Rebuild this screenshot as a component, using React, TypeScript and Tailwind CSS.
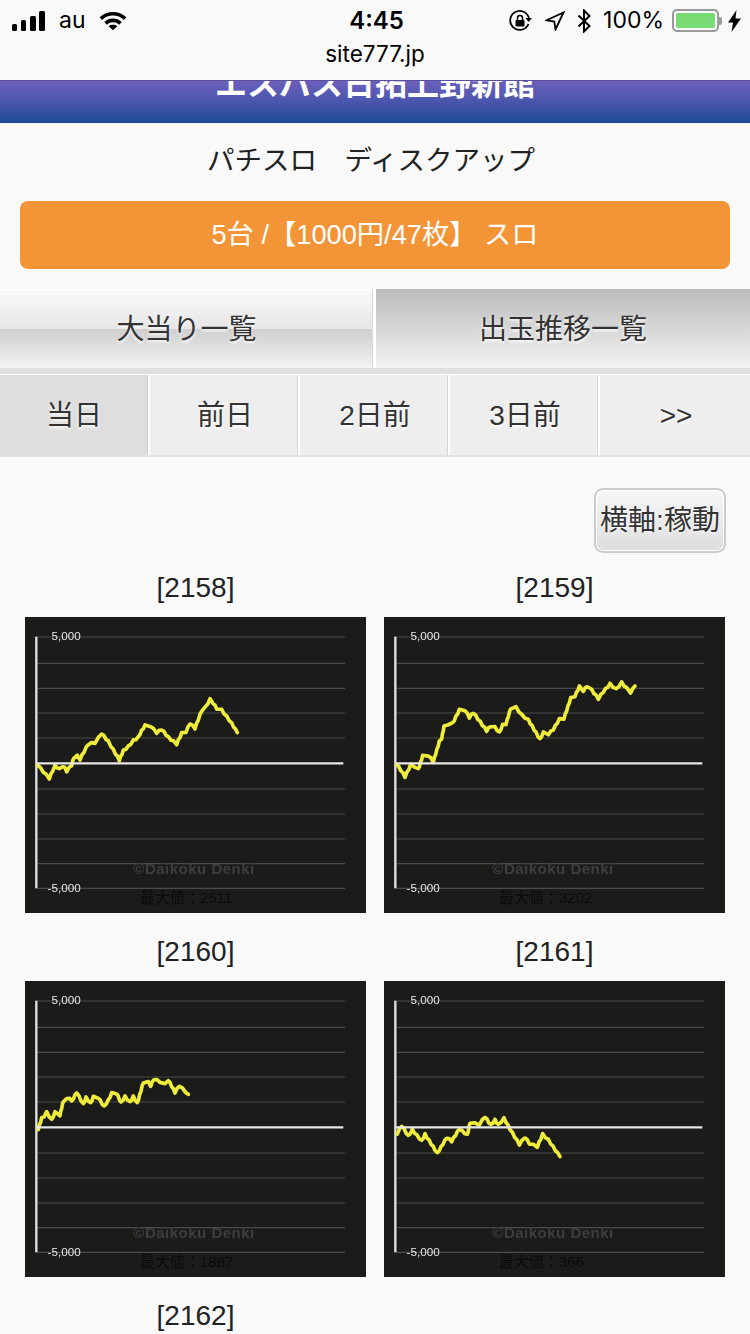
const dateTabs = [
  { label: "当日", active: true },
  { label: "前日" },
  { label: "2日前" },
  { label: "3日前" },
  { label: ">>", last: true },
];

const gridLines = [81, 160, 235, 309, 384, 537, 612, 687, 761, 835];

const charts = [
  {
    id: "2158",
    max: "2511",
    ox: 15,
    oy: 21,
    line: "52,462 62,476 70,485 88,505 98,482 105,468 112,472 118,478 128,468 134,474 140,483 155,465 162,442 172,438 180,448 192,425 205,402 225,398 235,384 245,370 265,395 280,420 298,450 310,422 325,410 340,392 355,382 365,362 375,347 392,348 410,368 425,358 445,382 470,402 485,370 498,365 510,340 525,355 535,328 545,302 558,290 570,268 580,280 590,295 605,300 620,320 635,340 652,368",
  },
  {
    id: "2159",
    max: "3202",
    ox: 12,
    oy: 21,
    line: "50,462 62,480 75,500 92,465 105,470 115,478 128,438 145,436 160,455 178,395 185,385 192,350 205,342 218,340 238,300 255,300 268,322 280,308 300,335 320,362 332,348 345,352 358,368 368,345 378,342 392,295 408,292 425,315 445,330 480,388 490,368 505,372 520,358 538,328 552,325 572,265 585,258 598,230 610,242 622,228 635,240 655,266 670,245 690,222 708,238 725,218 740,235 752,247 765,228",
  },
  {
    id: "2160",
    max: "1887",
    ox: 15,
    oy: 18,
    line: "55,462 65,430 72,424 80,412 95,435 105,412 120,420 130,378 150,368 155,380 170,352 190,388 198,368 212,385 220,366 235,368 252,395 265,376 275,355 290,355 303,383 315,365 330,382 340,365 352,385 370,322 385,322 392,332 402,312 420,320 435,328 445,315 465,352 478,332 505,358",
  },
  {
    id: "2161",
    max: "366",
    ox: 12,
    oy: 18,
    line: "52,475 65,452 85,483 97,465 125,498 135,478 172,535 200,488 215,498 238,462 262,480 270,443 298,448 315,425 332,450 345,435 355,450 372,430 390,462 418,508 435,487 448,505 472,515 488,478 505,495 540,545",
  },
];

// the graph images step up and down in small notches, so break each segment up
const jag = (line: string) => {
  const pts = line.split(" ").map((p) => p.split(",").map(Number));
  const out: string[] = [];
  let k = 0;
  pts.forEach((p, i) => {
    if (i === 0) return;
    const [x0, y0] = pts[i - 1];
    const n = Math.max(1, Math.round(Math.hypot(p[0] - x0, p[1] - y0) / 12));
    for (let j = 0; j < n; j++) {
      k++;
      const x = x0 + ((p[0] - x0) * j) / n;
      const y = y0 + ((p[1] - y0) * j) / n + (k % 2 ? 2.2 : -2.2);
      out.push(`${x.toFixed(1)},${y.toFixed(1)}`);
    }
  });
  out.push(pts[pts.length - 1].join(","));
  return out.join(" ");
};

const Chart = ({ max, ox, oy, line }: { max: string; ox: number; oy: number; line: string }) => {
  return (
    <svg viewBox="15 21 1023 888" className="block w-[341px] h-[296px] bg-[#1b1c1a] blur-[0.35px]">
      {gridLines.map((y) => (
        <line key={y} x1="52" x2="975" y1={y} y2={y} stroke="#4a4b49" strokeWidth="3.5" />
      ))}
      <line x1="49" x2="49" y1="80" y2="835" stroke="#e2e2e2" strokeWidth="7" />
      <text x="182" y="91" textAnchor="end" fontSize="35" fill="#e8e8e8" fontFamily="Liberation Sans, sans-serif">
        5,000
      </text>
      <text x="182" y="845" textAnchor="end" fontSize="35" fill="#e8e8e8" fontFamily="Liberation Sans, sans-serif">
        -5,000
      </text>
      <text
        x="340"
        y="792"
        fontSize="45"
        fill="#3d3d42"
        fontWeight="700"
        fontFamily="Liberation Sans, sans-serif"
        letterSpacing="1.5"
      >
        ©Daikoku Denki
      </text>
      <polyline
        points={jag(line)}
        transform={`translate(${15 - ox} ${21 - oy})`}
        fill="none"
        stroke="#f0ec3c"
        strokeWidth="11"
        strokeLinejoin="round"
        strokeLinecap="round"
      />
      <line x1="50" x2="970" y1="460" y2="460" stroke="#e8e8e6" strokeWidth="7" />
      <text
        x="360"
        y="879"
        fontSize="45"
        fill="#0b0b0b"
        fontFamily="Liberation Sans, Noto Sans CJK JP, sans-serif"
      >
        最大値：{max}
      </text>
    </svg>
  );
};

const StatusBar = () => {
  return (
    <div className="h-[80px] bg-[#f9f9f9] text-black font-['Inter','Noto_Sans_CJK_JP',sans-serif]">
      <div className="relative h-[41px] flex items-center justify-between pl-[12px] pr-[9px]">
        {/* left */}
        <div className="flex items-center">
          <svg width="34" height="22" viewBox="0 0 34 22" fill="#000">
            <rect x="0" y="14" width="5" height="7" rx="1.5" />
            <rect x="9" y="10" width="5" height="11" rx="1.5" />
            <rect x="18" y="6" width="6" height="15" rx="1.5" />
            <rect x="27" y="1" width="6" height="20" rx="1.5" />
          </svg>
          <span className="ml-[13px] text-[23px] leading-none">au</span>
          <svg className="ml-[13px]" width="28" height="22" viewBox="0 0 30 22" fill="none" stroke="#000" strokeWidth="3.8">
            <path d="M2 8.5C9.5 1.5 20.5 1.5 28 8.5" />
            <path d="M7 13.5C11.5 9.3 18.5 9.3 23 13.5" />
            <path d="M15 21l-4.6-4.4c2.6-2 6.6-2 9.2 0z" fill="#000" stroke="none" />
          </svg>
        </div>
        {/* time */}
        <span className="absolute left-[3px] right-0 text-center text-[24px] font-semibold leading-none">4:45</span>
        {/* right */}
        <div className="flex items-center">
          <svg width="24" height="24" viewBox="0 0 24 24" fill="none" stroke="#000" strokeWidth="1.8">
            <path d="M20.5 15a9.5 9.5 0 1 1 .5-5.5" />
            <path d="M17.5 9h6.5l-3.3 4z" fill="#000" stroke="none" />
            <rect x="7.5" y="11" width="9" height="6.5" rx="1" fill="#000" stroke="none" />
            <path d="M9.5 11V9a2.5 2.5 0 0 1 5 0v2" strokeWidth="1.5" />
          </svg>
          <svg className="ml-[13px]" width="20" height="20" viewBox="0 0 20 20" fill="none" stroke="#000" strokeWidth="1.8" strokeLinejoin="miter">
            <path d="M18.5 1.5L10.5 18.5 9.3 10.5 1.5 9.3z" />
          </svg>
          <svg className="ml-[12px]" width="15" height="24" viewBox="0 0 15 24" fill="none" stroke="#000" strokeWidth="2">
            <path d="M1.5 6.5L12.5 17 7 22.5V1.5L12.5 7 1.5 17.5" />
          </svg>
          <span className="ml-[11px] text-[23px] leading-none">100%</span>
          <div className="ml-[8px] w-[47px] h-[23px] border-2 border-[#9a9a9a] rounded-[5px] p-[2px]">
            <div className="w-full h-full rounded-[2px] bg-[#78db73]" />
          </div>
          <div className="w-[3px] h-[8px] bg-[#9a9a9a] rounded-r-[2px]" />
          <svg className="ml-[6px]" width="13" height="22" viewBox="0 0 13 22" fill="#000">
            <path d="M8.5 0L0 12.5h5L3.5 22 13 8.5H7.5z" />
          </svg>
        </div>
      </div>
      <div className="text-center text-[22.5px] leading-[26px]">site777.jp</div>
    </div>
  );
};

export default function App() {
  return (
    <div className="w-[750px] h-[1334px] overflow-hidden bg-[#f9f9f9] text-[#222] font-['Liberation_Sans','Noto_Sans_CJK_JP',sans-serif]">
      <StatusBar />

      {/* Title, scrolled under the browser bar */}
      <div className="h-[43px] overflow-hidden border-t border-[#5a4f9c] bg-gradient-to-b from-[#6c60bd] to-[#1c4a99]">
        <h1 className="-mt-[16px] text-center text-[32px] leading-[38px] font-bold text-white whitespace-nowrap">
          エスパス日拓上野新館
        </h1>
      </div>

      <p className="mt-[19px] pr-[8px] text-center text-[27.5px] leading-[38px]">パチスロ　ディスクアップ</p>

      <div className="mx-[20px] mt-[21px] h-[68px] rounded-[8px] bg-[#f39536] flex items-center justify-center text-[27.25px] text-white">
        5台 /【1000円/47枚】 スロ
      </div>

      {/* Main tabs */}
      <div className="mt-[20px] flex h-[79px] [text-shadow:0_2px_3px_#fff]">
        <div className="w-[373px] border-t-2 border-white bg-[linear-gradient(#f9f9f9_0%,#e6e6e6_49%,#cfcfcf_50%,#f3f3f3_100%)] flex items-center justify-center text-[28px] text-[#333]">
          大当り一覧
        </div>
        <div className="flex-1 border-l-[3px] border-white pt-[2px] shadow-[-1px_0_0_#d8d8d8] bg-gradient-to-b from-[#bcbcbc] to-[#f2f2f2] flex items-center justify-center text-[28px] text-[#333]">
          出玉推移一覧
        </div>
      </div>

      {/* Date tabs */}
      <div className="border-t-[6px] border-[#dfdfdf] grid grid-cols-5 h-[89px] border-b-2 border-b-[#e2e2e2] [text-shadow:0_2px_3px_#fff]">
        {dateTabs.map((tab) => (
          <div
            key={tab.label}
            className={
              tab.last
                ? "bg-[#eeeeee] border-t border-white pt-[2px] pl-[2px] flex items-center justify-center text-[28px] text-[#333]"
                : tab.active
                  ? "bg-[#dedede] border-t border-white pt-[2px] border-r-2 border-r-white shadow-[inset_-1px_0_0_#cfcfcf] flex items-center justify-center text-[28px] text-[#333]"
                  : "bg-[#eeeeee] border-t border-white pt-[2px] pl-[2px] border-r-2 border-r-white shadow-[inset_-1px_0_0_#d4d4d4] flex items-center justify-center text-[28px] text-[#333]"
            }
          >
            {tab.label}
          </div>
        ))}
      </div>

      {/* Toggle */}
      <div className="flex justify-end pr-[24px] pt-[31px]">
        <div className="w-[132px] h-[65px] rounded-[9px] border-2 border-[#cccccc] shadow-[inset_0_0_0_1px_#fff] bg-gradient-to-b from-[#f7f7f7] to-[#dddddd] flex items-center justify-center text-[28px] text-[#333] whitespace-nowrap [text-shadow:0_1px_3px_#fff]">
          横軸:稼動
        </div>
      </div>

      {/* Charts */}
      <div className="mt-[15px] px-[16px] grid grid-cols-2">
        {charts.map((chart) => (
          <div key={chart.id} className="flex flex-col items-center h-[364px]">
            <div className="h-[40px] leading-[40px] text-[28px]">[{chart.id}]</div>
            <div className="mt-[9px]">
              <Chart max={chart.max} ox={chart.ox} oy={chart.oy} line={chart.line} />
            </div>
          </div>
        ))}
        <div className="flex flex-col items-center">
          <div className="h-[40px] leading-[40px] text-[28px]">[2162]</div>
        </div>
      </div>
    </div>
  );
}
